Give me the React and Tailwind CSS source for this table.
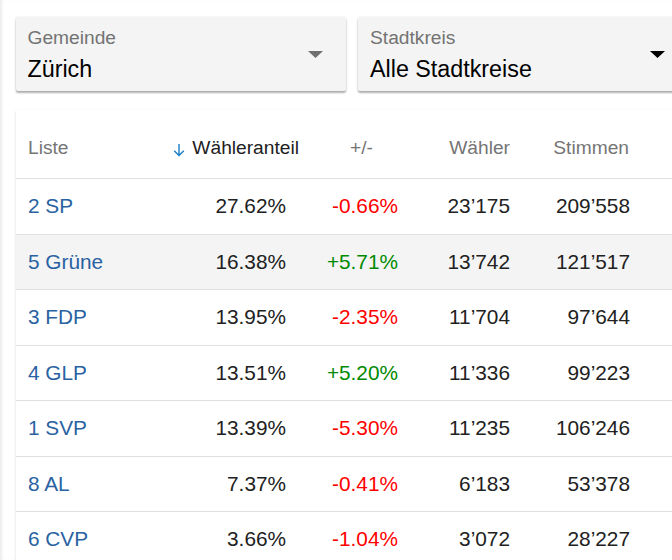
import React from 'react';

const rows = [
  { liste: '2 SP', anteil: '27.62%', diff: '-0.66%', waehler: '23’175', stimmen: '209’558' },
  { liste: '5 Grüne', anteil: '16.38%', diff: '+5.71%', waehler: '13’742', stimmen: '121’517' },
  { liste: '3 FDP', anteil: '13.95%', diff: '-2.35%', waehler: '11’704', stimmen: '97’644' },
  { liste: '4 GLP', anteil: '13.51%', diff: '+5.20%', waehler: '11’336', stimmen: '99’223' },
  { liste: '1 SVP', anteil: '13.39%', diff: '-5.30%', waehler: '11’235', stimmen: '106’246' },
  { liste: '8 AL', anteil: '7.37%', diff: '-0.41%', waehler: '6’183', stimmen: '53’378' },
  { liste: '6 CVP', anteil: '3.66%', diff: '-1.04%', waehler: '3’072', stimmen: '28’227' },
];

function SelectCard({ label, value, arrowClass }) {
  return (
    <div className="relative w-[330px] h-[74px] shrink-0 bg-[#f4f4f4] rounded-[2px] shadow-[0_2px_2px_rgba(0,0,0,0.3),0_0_2px_rgba(0,0,0,0.12)] px-[12px] pt-[10px]">
      <div className="text-[19.2px] leading-[22px] text-[#737373]">{label}</div>
      <div className="mt-[6px] text-[23.3px] leading-[28px] text-black">{value}</div>
      <svg className="absolute right-[23px] top-[34px]" width="15" height="7" viewBox="0 0 15 7">
        <polygon points="0,0 15,0 7.5,7" className={arrowClass} />
      </svg>
    </div>
  );
}

function App() {
  return (
    <div
      className="relative w-full h-[560px] overflow-hidden bg-white shadow-[inset_3px_0_3px_-1px_rgba(0,0,0,0.08)]"
      style={{ fontFamily: '"Liberation Sans", Arial, sans-serif' }}
    >
      <div className="flex gap-[12.5px] pl-[15.5px] pt-[17px]">
        <SelectCard label="Gemeinde" value="Zürich" arrowClass="fill-[#6f6f6f]" />
        <SelectCard label="Stadtkreis" value="Alle Stadtkreise" arrowClass="fill-black" />
      </div>

      <div className="ml-[16px] mt-[19px] w-[720px] bg-white rounded-[2px] shadow-[0_2px_1px_-1px_rgba(0,0,0,0.2),0_1px_1px_rgba(0,0,0,0.14),0_1px_3px_rgba(0,0,0,0.12)]">
        {/* header */}
        <div className="flex items-start h-[69px] pt-[27px] border-b border-[#e0e0e0] text-[#757575] text-[19.2px] leading-[22px]">
          <div className="w-[156px] pl-[12px]">Liste</div>
          <div className="w-[128px] flex justify-end items-start gap-[6px] pr-[1px] text-[#212121]">
            <svg width="14" height="14" viewBox="0 0 14 14" className="mt-[6px]">
              <path d="M7 1v11.5M2.2 7.7l4.8 4.8 4.8-4.8" fill="none" stroke="#1a7dc6" strokeWidth="1.4" />
            </svg>
            <span>Wähleranteil</span>
          </div>
          <div className="w-[112px] text-right pr-[39px]">+/-</div>
          <div className="w-[112px] text-right pr-[14px]">Wähler</div>
          <div className="w-[120px] text-right pr-[15px]">Stimmen</div>
        </div>

        {rows.map((r, i) => (
          <div
            key={r.liste}
            className={
              'flex items-center h-[55.5px] border-b border-[#e0e0e0] text-[#212121] text-[20.8px] leading-[24px] ' +
              (i === 1 ? 'bg-[#f4f4f4]' : 'bg-white')
            }
          >
            <div className="w-[156px] pl-[12px] text-[#2962a2]">{r.liste}</div>
            <div className="w-[128px] text-right pr-[14px]">{r.anteil}</div>
            <div
              className={
                'w-[112px] text-right pr-[14px] ' +
                (r.diff.startsWith('+') ? 'text-[#008a00]' : 'text-[#ff0000]')
              }
            >
              {r.diff}
            </div>
            <div className="w-[112px] text-right pr-[14px]">{r.waehler}</div>
            <div className="w-[120px] text-right pr-[14px]">{r.stimmen}</div>
          </div>
        ))}
      </div>
    </div>
  );
}

export default App;
